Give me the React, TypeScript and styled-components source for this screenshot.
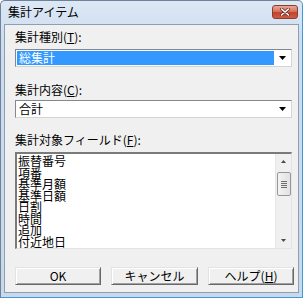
import React from "react";
import styled, {createGlobalStyle} from "styled-components";

const GlobalStyle = createGlobalStyle`
    html, body {
        margin: 0;
        padding: 0;
        background: #ffffff;
    }
    body {
        font-family: "Noto Sans CJK JP", "Liberation Sans", sans-serif;
        font-size: 12px;
        color: #000;
    }
`;

const Window = styled.div`
    box-sizing: border-box;
    width: 303px;
    height: 298px;
    display: flex;
    flex-direction: column;
    border: 1px solid;
    border-color: #6f8297 #3f9ad6 #3f9ad6 #6f8297;
    border-radius: 5px 5px 0 0;
    background: linear-gradient(#dce8f5, #cddcee 40px, #c9d9ec);
`;

const TitleBar = styled.div`
    height: 23px;
    display: flex;
    align-items: center;
    justify-content: space-between;
    padding: 0 4px 0 7px;
`;

const Title = styled.span`
    font-size: 12px;
    line-height: 14px;
    margin-top: -1px;
`;

const CloseButton = styled.div`
    box-sizing: border-box;
    width: 26px;
    height: 14px;
    margin-top: -2px;
    border: 1px solid #8c3d30;
    border-radius: 3px;
    background: linear-gradient(#e8a898, #d6735f 45%, #c4432c 55%, #cf5b43);
    display: flex;
    align-items: center;
    justify-content: center;
`;

const Client = styled.div`
    flex: 1;
    margin: 0 3px 4px 3px;
    border: 1px solid #8d9fb5;
    background: #f0f0f0;
    display: flex;
    flex-direction: column;
    padding: 0 0 0 10px;
`;

const Label = styled.div<{ $top: number }>`
    margin-top: ${(p) => p.$top}px;
    line-height: 14px;
    height: 14px;
    white-space: nowrap;
`;

const Key = styled.span`
    text-decoration: underline;
`;

const Combo = styled.div<{ $top: number }>`
    box-sizing: border-box;
    margin-top: ${(p) => p.$top}px;
    width: 277px;
    height: 18px;
    display: flex;
    background: #fff;
    border: 1px solid;
    border-color: #828790 #d4d4d4 #d4d4d4 #828790;
    padding: 1px;
`;

const ComboText = styled.div<{ $selected?: boolean }>`
    flex: 1;
    line-height: 14px;
    padding-left: 2px;
    background: ${(p) => (p.$selected ? "#3399ff" : "transparent")};
    color: ${(p) => (p.$selected ? "#fff" : "#000")};
`;

const DropButton = styled.div`
    width: 15px;
    margin-left: 1px;
    display: flex;
    align-items: center;
    justify-content: center;
    background: #fff;
`;

const ListBox = styled.div`
    box-sizing: border-box;
    margin-top: 5px;
    width: 277px;
    height: 97px;
    display: flex;
    background: #fff;
    border-style: solid;
    border-width: 2px 1px 1px 2px;
    border-color: #7a7a7a #e3e3e3 #e3e3e3 #7a7a7a;
    overflow: hidden;
`;

const Items = styled.div`
    flex: 1;
    padding: 1px 0 0 1px;
    overflow: hidden;
`;

const Item = styled.div`
    line-height: 11.5px;
    height: 11.5px;
    white-space: nowrap;
`;

const ScrollBar = styled.div`
    width: 15px;
    display: flex;
    flex-direction: column;
    align-items: center;
    background: #f0f0f0;
    border-left: 1px solid #e6e6e6;
`;

const Arrow = styled.div`
    height: 15px;
    width: 15px;
    display: flex;
    align-items: center;
    justify-content: center;
`;

const Thumb = styled.div`
    box-sizing: border-box;
    width: 14px;
    height: 24px;
    margin-top: 3px;
    border: 1px solid #979797;
    border-radius: 2px;
    background: linear-gradient(90deg, #f3f3f3, #e2e2e2);
    display: flex;
    flex-direction: column;
    align-items: center;
    justify-content: center;
    gap: 1px;
`;

const Grip = styled.div`
    width: 6px;
    height: 1px;
    background: #6f6f6f;
`;

const Track = styled.div`
    flex: 1;
`;

const ButtonRow = styled.div`
    margin-top: 18px;
    display: flex;
    gap: 10px;
`;

const Button = styled.div<{ $w: number }>`
    box-sizing: border-box;
    width: ${(p) => p.$w}px;
    height: 18px;
    display: flex;
    align-items: center;
    justify-content: center;
    background: #f0f0f0;
    border: 1px solid;
    border-color: #e3e3e3 #696969 #696969 #e3e3e3;
    box-shadow: inset 1px 1px #ffffff, inset -1px -1px #a0a0a0;
    line-height: 14px;
`;

const Tri = ({down}: { down?: boolean }) => (
    <svg width="7" height="4" viewBox="0 0 7 4">
        <path d={down ? "M0 0h7L3.5 4z" : "M0 4h7L3.5 0z"} fill="#000" />
    </svg>
);

const SmallTri = ({down}: { down?: boolean }) => (
    <svg width="5" height="3" viewBox="0 0 5 3">
        <path d={down ? "M0 0h5L2.5 3z" : "M0 3h5L2.5 0z"} fill="#4a4a4a" />
    </svg>
);

const fields = ["振替番号", "項番", "基準月額", "基準日額", "日割", "時間", "追加", "付近地日"];

export default function App() {
    return (
        <>
            <GlobalStyle />
            <Window>
                <TitleBar>
                    <Title>集計アイテム</Title>
                    <CloseButton>
                        <svg width="10" height="8" viewBox="0 0 10 8">
                            <path d="M1.5 1l7 6M8.5 1l-7 6" stroke="#6b2a20" strokeWidth="3" strokeLinecap="round" />
                            <path d="M1.5 1l7 6M8.5 1l-7 6" stroke="#fff" strokeWidth="1.6" strokeLinecap="round" />
                        </svg>
                    </CloseButton>
                </TitleBar>
                <Client>
                    <Label $top={5}>集計種別(<Key>T</Key>):</Label>
                    <Combo $top={5}>
                        <ComboText $selected>総集計</ComboText>
                        <DropButton><Tri down /></DropButton>
                    </Combo>
                    <Label $top={16}>集計内容(<Key>C</Key>):</Label>
                    <Combo $top={3}>
                        <ComboText>合計</ComboText>
                        <DropButton><Tri down /></DropButton>
                    </Combo>
                    <Label $top={15}>集計対象フィールド(<Key>F</Key>):</Label>
                    <ListBox>
                        <Items>
                            {fields.map((f) => (
                                <Item key={f}>{f}</Item>
                            ))}
                        </Items>
                        <ScrollBar>
                            <Arrow><SmallTri /></Arrow>
                            <Thumb>
                                <Grip />
                                <Grip />
                                <Grip />
                                <Grip />
                            </Thumb>
                            <Track />
                            <Arrow><SmallTri down /></Arrow>
                        </ScrollBar>
                    </ListBox>
                    <ButtonRow>
                        <Button $w={86}>OK</Button>
                        <Button $w={87}>キャンセル</Button>
                        <Button $w={86}>ヘルプ(<Key>H</Key>)</Button>
                    </ButtonRow>
                </Client>
            </Window>
        </>
    );
}
